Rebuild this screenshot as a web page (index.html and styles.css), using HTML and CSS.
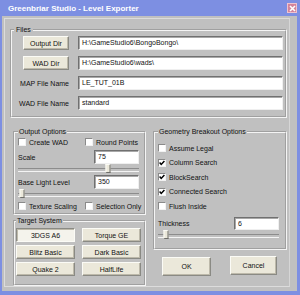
FILE: index.html
```html
<!DOCTYPE html>
<html lang="en">
<head>
    <meta charset="UTF-8">
    <title>Greenbriar Studio - Level Exporter</title>
    <link rel="stylesheet" href="styles.css">
</head>
<body>

    <div class="window">
        <div class="titlebar">
            <span class="title">Greenbriar Studio - Level Exporter</span>
            <span class="close">
                <svg width="7" height="7" viewBox="0 0 7 7"><path d="M1 1 L6 6 M6 1 L1 6" stroke="#fff" stroke-width="1.6"/></svg>
            </span>
        </div>

        <div class="client">
            <div class="panel">

                <fieldset class="group files">
                    <legend>Files</legend>
                    <div class="files-grid">
                        <button class="btn">Output Dir</button>
                        <div class="field">H:\GameStudio6\BongoBongo\</div>
                        <button class="btn">WAD Dir</button>
                        <div class="field">H:\GameStudio6\wads\</div>
                        <span class="file-label">MAP File Name</span>
                        <div class="field">LE_TUT_01B</div>
                        <span class="file-label">WAD File Name</span>
                        <div class="field">standard</div>
                    </div>
                </fieldset>

                <div class="lower">
                    <div class="col">
                        <fieldset class="group output">
                            <legend>Output Options</legend>
                            <div class="check-pair">
                                <span class="check"><span class="box"></span>Create WAD</span>
                                <span class="check"><span class="box"></span>Round Points</span>
                            </div>
                            <div class="value-row first">
                                <span>Scale</span>
                                <div class="field small">75</div>
                            </div>
                            <div class="slider"><span class="thumb" style="left: 74%"></span></div>
                            <div class="value-row">
                                <span>Base Light Level</span>
                                <div class="field small">350</div>
                            </div>
                            <div class="slider"><span class="thumb" style="left: 3%"></span></div>
                            <div class="check-pair last">
                                <span class="check"><span class="box"></span>Texture Scaling</span>
                                <span class="check"><span class="box"></span>Selection Only</span>
                            </div>
                        </fieldset>

                        <fieldset class="group target">
                            <legend>Target System</legend>
                            <div class="target-grid">
                                <button class="btn pressed">3DGS A6</button>
                                <button class="btn">Torque GE</button>
                                <button class="btn">Blitz Basic</button>
                                <button class="btn">Dark Basic</button>
                                <button class="btn">Quake 2</button>
                                <button class="btn">HalfLife</button>
                            </div>
                        </fieldset>
                    </div>

                    <div class="col">
                        <fieldset class="group geometry">
                            <legend>Geometry Breakout Options</legend>
                            <div class="check-list">
                                <span class="check"><span class="box"></span>Assume Legal</span>
                                <span class="check"><span class="box checked"><svg width="6" height="6" viewBox="0 0 6 6"><path d="M0.6 2.6 L2.2 4.4 L5.4 0.9" fill="none" stroke="#000" stroke-width="1.5"/></svg></span>Column Search</span>
                                <span class="check"><span class="box checked"><svg width="6" height="6" viewBox="0 0 6 6"><path d="M0.6 2.6 L2.2 4.4 L5.4 0.9" fill="none" stroke="#000" stroke-width="1.5"/></svg></span>BlockSearch</span>
                                <span class="check"><span class="box checked"><svg width="6" height="6" viewBox="0 0 6 6"><path d="M0.6 2.6 L2.2 4.4 L5.4 0.9" fill="none" stroke="#000" stroke-width="1.5"/></svg></span>Connected Search</span>
                                <span class="check"><span class="box"></span>Flush Inside</span>
                            </div>
                            <div class="value-row thick">
                                <span>Thickness</span>
                                <div class="field small">6</div>
                            </div>
                            <div class="slider"><span class="thumb" style="left: 7%"></span></div>
                        </fieldset>

                        <div class="actions">
                            <button class="btn big">OK</button>
                            <button class="btn big cancel">Cancel</button>
                        </div>
                    </div>
                </div>

            </div>
        </div>
    </div>

</body>
</html>
```

FILE: styles.css
```css
/* Reset */
* {
    box-sizing: border-box;
}

html, body {
    margin: 0;
    padding: 0;
    background: #c0c0c0;
}

body {
    font-family: "Liberation Sans", Arial, sans-serif;
    font-size: 7px;
    color: #111;
}

/* Window frame */
.window {
    width: 300px;
    height: 295px;
    display: flex;
    flex-direction: column;
}

.titlebar {
    height: 16px;
    flex: none;
    display: flex;
    align-items: center;
    justify-content: space-between;
    padding: 0 3px 0 8px;
    background: #7d8fe2;
}

.title {
    color: #fff;
    font-weight: bold;
    font-size: 8px;
    white-space: nowrap;
}

.close {
    width: 10px;
    height: 10px;
    display: flex;
    align-items: center;
    justify-content: center;
    background: #d3849b;
    border: 1px solid #efc3cf;
}

.client {
    flex: 1;
    border-left: 2px solid #7d8fe2;
    border-right: 3px solid #7d8fe2;
    border-bottom: 4px solid #7d8fe2;
    padding: 2px 7px 4px 2px;
    background: #c0c0c0;
}

.panel {
    height: 100%;
    border: 1px solid #dcdcdc;
    border-right-color: #d6d6d6;
    padding: 7px 2px 0 5px;
}

/* Group boxes */
.group {
    margin: 0;
    padding: 0;
    min-inline-size: 0;
    border: 2px groove #f4f4f4;
}

.group legend {
    padding: 0 1px;
    margin-left: 0;
    line-height: 8px;
    font-size: 7px;
}

.files legend {
    margin-left: 2px;
    padding: 0 2px;
}

/* Files */
.files {
    padding: 1px 2px 6px 0;
}

.files-grid {
    display: grid;
    grid-template-columns: 57px 1fr;
    grid-auto-rows: 14px;
    column-gap: 9px;
    row-gap: 6px;
    padding-top: 1px;
}

.files-grid .btn {
    justify-self: end;
    width: 46px;
}

.file-label {
    justify-self: end;
    align-self: center;
    white-space: nowrap;
}

/* Inputs */
.field {
    height: 14px;
    background: #fff;
    border: 1px solid;
    border-color: #707070 #efefef #efefef #707070;
    box-shadow: inset 1px 1px 0 #a8a8a8;
    padding-left: 3px;
    line-height: 12px;
    white-space: nowrap;
    overflow: hidden;
}

.field.small {
    width: 45px;
}

/* Buttons */
.btn {
    font-family: inherit;
    font-size: 7px;
    color: #111;
    margin: 0;
    padding: 0;
    height: 14px;
    background: #ebe8da;
    border: 1px solid;
    border-color: #fbfbf6 #8a8a84 #8a8a84 #fbfbf6;
    box-shadow: inset -1px -1px 0 #bdb9aa;
}

.btn.pressed {
    background: #f4f3ec;
    border-color: #8a8a84 #fbfbf6 #fbfbf6 #8a8a84;
    box-shadow: inset 1px 1px 0 #bdb9aa;
}

.btn.big {
    width: 49px;
    height: 19px;
}

.btn.cancel {
    width: 47px;
    margin-top: -1px;
}

/* Lower area */
.lower {
    display: grid;
    grid-template-columns: 133px 134px;
    column-gap: 7px;
    margin: 10px 0 0 3px;
}

.col {
    display: flex;
    flex-direction: column;
}

/* Output options */
.output {
    padding: 1px 5px 2px 3px;
}

.check-pair {
    display: grid;
    grid-template-columns: 67px 1fr;
    height: 10px;
}

.check-pair.last {
    margin-top: 3px;
}

.check {
    display: flex;
    align-items: center;
    gap: 3px;
    height: 10px;
    white-space: nowrap;
}

.box {
    width: 8px;
    height: 8px;
    flex: none;
    display: flex;
    align-items: center;
    justify-content: center;
    background: #fff;
    border: 1px solid;
    border-color: #8a8a8a #f2f2f2 #f2f2f2 #8a8a8a;
}

.value-row {
    display: flex;
    align-items: center;
    justify-content: space-between;
    margin-top: 2px;
}

.value-row.first {
    margin-top: 3px;
}

.value-row.thick {
    margin-top: 6px;
}

.value-row.thick .field {
    height: 13px;
    line-height: 11px;
}

/* Trackbars */
.slider {
    position: relative;
    height: 9px;
}

.slider::before {
    content: "";
    position: absolute;
    left: 0;
    right: 0;
    top: 4px;
    height: 2px;
    border-top: 1px solid #8c8c8c;
    border-bottom: 1px solid #f4f4f4;
}

.thumb {
    position: absolute;
    top: 0;
    width: 5px;
    height: 9px;
    transform: translateX(-50%);
    background: #ebe8da;
    border: 1px solid;
    border-color: #fbfbf6 #6e6e6a #6e6e6a #fbfbf6;
}

/* Target system */
.target {
    margin-top: 2px;
    padding: 3px 5px 8px 1px;
}

.target-grid {
    display: grid;
    grid-template-columns: 59px 59px;
    grid-auto-rows: 14px;
    column-gap: 7px;
    row-gap: 3px;
}

/* Geometry options */
.geometry {
    padding: 7px 6px 9px 3px;
}

.check-list {
    display: flex;
    flex-direction: column;
    gap: 4.5px;
}

.actions {
    display: flex;
    gap: 19px;
    margin-top: 7px;
    padding-left: 9px;
}
```
